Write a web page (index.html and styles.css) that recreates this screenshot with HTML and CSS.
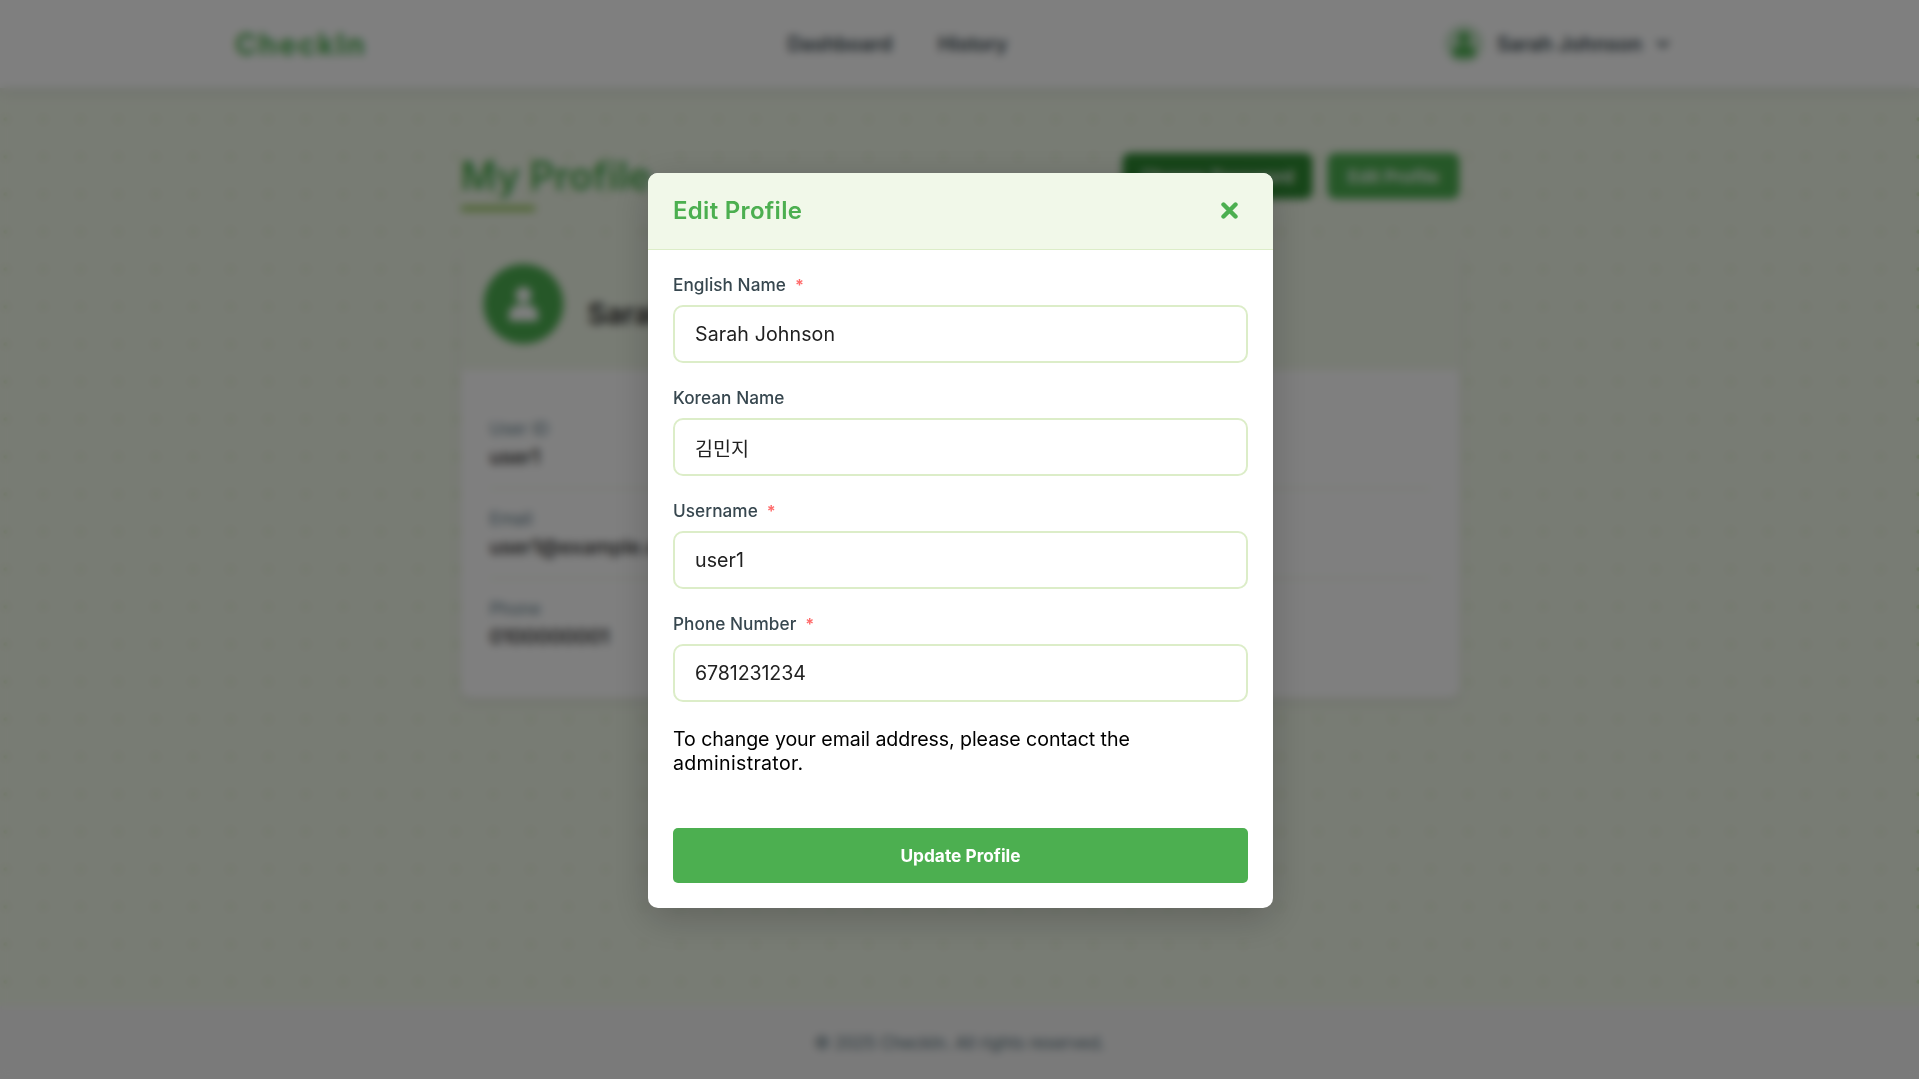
FILE: index.html
```html
<!DOCTYPE html>
<html lang="en">
<head>
<meta charset="utf-8">
<title>CheckIn – My Profile</title>
<link rel="stylesheet" href="styles.css">
</head>
<body>
<div class="app">
  <header class="topbar">
    <div class="logo">CheckIn</div>
    <nav class="nav"><a>Dashboard</a><a>History</a></nav>
    <div class="user">
      <span class="user-avatar"><svg viewBox="0 0 30 34" width="22" height="25"><circle cx="15" cy="8" r="8"/><path d="M0 30c0-8 5-12 10-12h10c5 0 10 4 10 12 0 3-1 4-4 4H4c-3 0-4-1-4-4z"/></svg></span>
      <span>Sarah Johnson</span>
      <svg class="chevron" viewBox="0 0 14 12" width="14" height="12"><path d="M1.500 3L7 8.500l5.500-5.500"/></svg>
    </div>
  </header>
  <main class="main">
    <div class="page-head">
      <h1>My Profile</h1>
      <div class="actions">
        <button class="btn btn-dark">Change Password</button>
        <button class="btn">Edit Profile</button>
      </div>
    </div>
    <section class="card">
      <div class="card-head">
        <span class="avatar"><svg viewBox="0 0 30 34" width="30" height="34"><circle cx="15" cy="8" r="8"/><path d="M0 30c0-8 5-12 10-12h10c5 0 10 4 10 12 0 3-1 4-4 4H4c-3 0-4-1-4-4z"/></svg></span>
        <h2>Sarah Johnson</h2>
      </div>
      <dl class="details">
        <div><dt>User ID</dt><dd>user1</dd></div>
        <div><dt>Email</dt><dd>user1@example.com</dd></div>
        <div><dt>Phone</dt><dd>0100000001</dd></div>
      </dl>
    </section>
  </main>
  <footer class="footer">© 2025 CheckIn. All rights reserved.</footer>
</div>

<div class="overlay">
  <div class="modal">
    <div class="modal-head">
      <h3>Edit Profile</h3>
      <button class="close" aria-label="Close"><svg viewBox="0 0 17 17" width="17" height="17"><path d="M2.500 2.500l12 12M14.500 2.500l-12 12"/></svg></button>
    </div>
    <form class="form">
      <div class="field"><label class="required">English Name</label><input class="name" type="text" value="Sarah Johnson"></div>
      <div class="field"><label>Korean Name</label><input class="korean" type="text" value="김민지"></div>
      <div class="field"><label class="required">Username</label><input type="text" value="user1"></div>
      <div class="field"><label class="required">Phone Number</label><input class="phone" type="text" value="6781231234"></div>
      <p class="note">To change your email address, please contact the <span class="note-end">administrator.</span></p>
      <button class="submit" type="button">Update Profile</button>
    </form>
  </div>
</div>
</body>
</html>
```

FILE: styles.css
```css
* { box-sizing: border-box; margin: 0; padding: 0; }
html, body { height: 100%; overflow: hidden; }
body { font-family: "Inter", "Noto Sans CJK KR", sans-serif; color: #212121; }
button, input { font-family: inherit; border: 0; }

.app {
  height: 100vh;
  display: flex;
  flex-direction: column;
  background-color: #f1f8e9;
  background-image: radial-gradient(circle, rgba(139, 195, 74, .4) 1.6px, transparent 2.2px);
  background-size: 37.5px 37.5px;
  background-position: -13px -12px;
}
.topbar {
  height: 88px;
  flex: none;
  display: grid;
  grid-template-columns: 1fr auto 1fr;
  align-items: center;
  padding: 0 249px 0 235px;
  background: #fff;
  box-shadow: 0 3px 12px rgba(0, 0, 0, .1);
}
.logo { font-size: 29.5px; font-weight: 700; letter-spacing: 1.8px; color: #4caf50; }
.nav { display: flex; gap: 46px; margin-right: 110px; font-size: 20px; font-weight: 600; letter-spacing: -.1px; color: #37474f; }
.user { display: flex; align-items: center; justify-content: flex-end; font-size: 20px; font-weight: 600; letter-spacing: .05px; color: #37474f; }
.user-avatar { display: grid; place-items: center; width: 38px; height: 38px; margin-right: 14px; border-radius: 50%; background: #c8e6c9; }
.user-avatar svg { fill: #4caf50; }
.chevron { margin-left: 14px; fill: none; stroke: #37474f; stroke-width: 2.600; }

.main { flex: 1; width: 999px; margin: 0 auto; padding-top: 65px; transform: translateX(.5px); }
.page-head { display: flex; justify-content: space-between; height: 92px; }
h1 { height: 60px; line-height: 45px; font-size: 39px; font-weight: 600; letter-spacing: -.1px; color: #4caf50; }
h1::after { content: ""; display: block; width: 75px; height: 5px; margin-top: 8px; border-radius: 3px; background: #8bc34a; }
.actions { display: flex; gap: 15px; }
.btn { height: 46px; width: 132px; border-radius: 8px; background: #4caf50; color: #fff; font-size: 17.5px; font-weight: 600; }
.btn-dark { width: 190px; background: #2e8b32; }
.card { height: 453px; background: #fff; border-radius: 10px; overflow: hidden; box-shadow: 0 5px 10px rgba(0, 0, 0, .07); }
.card-head { height: 125px; padding: 0 23px 7px; display: flex; align-items: center; gap: 24px; background: #f1f8e9; }
.avatar { width: 80px; height: 80px; border-radius: 50%; background: #4caf50; display: grid; place-items: center; }
.avatar svg { fill: #fff; }
h2 { padding-top: 19px; font-size: 29px; font-weight: 600; }
.details { padding: 29px 29px 0; }
.details div { height: 90px; padding-top: 19px; border-bottom: 1px solid #dcedc8; }
.details div:last-child { border: 0; }
dt { font-size: 17px; line-height: 22px; color: #607d8b; }
dd { margin-top: 5px; font-size: 20px; line-height: 24px; font-weight: 500; }
.footer { height: 73px; flex: none; display: grid; place-items: center; font-size: 16.8px; color: #546e7a; background: #f5f5f5; }

.overlay {
  position: fixed;
  inset: 0;
  display: grid;
  place-items: center;
  background: rgba(0, 0, 0, .5);
  backdrop-filter: blur(4.500px);
}
.modal { width: 625px; height: 735px; background: #fff; border-radius: 10px; overflow: hidden; box-shadow: 0 10px 38px rgba(0, 0, 0, .2); transform: translate(1px, 1px); }
.modal-head { height: 77px; padding: 0 35px 1px 25px; display: flex; align-items: center; justify-content: space-between; background: #f1f8e9; border-bottom: 1px solid #dcedc8; }
h3 { font-size: 24px; font-weight: 600; letter-spacing: .3px; color: #4caf50; }
.close { display: flex; background: none; }
.close svg { fill: none; stroke: #4caf50; stroke-width: 4.400; stroke-linecap: round; }
.form { padding: 23px 25px 25px; }
.field { height: 113px; }
label { display: block; height: 32px; line-height: 23px; font-size: 17.2px; font-weight: 550; letter-spacing: .05px; color: #37474f; }
.required::after { content: "*"; margin-left: 9px; font-size: 16px; font-weight: 700; color: #ff6b6b; }
input { display: block; width: 100%; height: 58px; padding: 0 20px; border: 2px solid #dcedc8; border-radius: 10px; font-size: 19.6px; letter-spacing: .05px; color: #212121; background: #fff; outline: 0; }
.name { letter-spacing: .1px; }
.korean { letter-spacing: 0; }
.phone { letter-spacing: -.1px; }
.note { height: 103px; padding-top: 2px; font-size: 19.6px; line-height: 24px; letter-spacing: -.08px; color: #000; }
.note-end { letter-spacing: .3px; }
.submit { display: block; width: 100%; height: 55px; padding-bottom: 1px; border-radius: 5px; background: #4caf50; color: #fff; font-size: 17.3px; font-weight: 650; }
```
